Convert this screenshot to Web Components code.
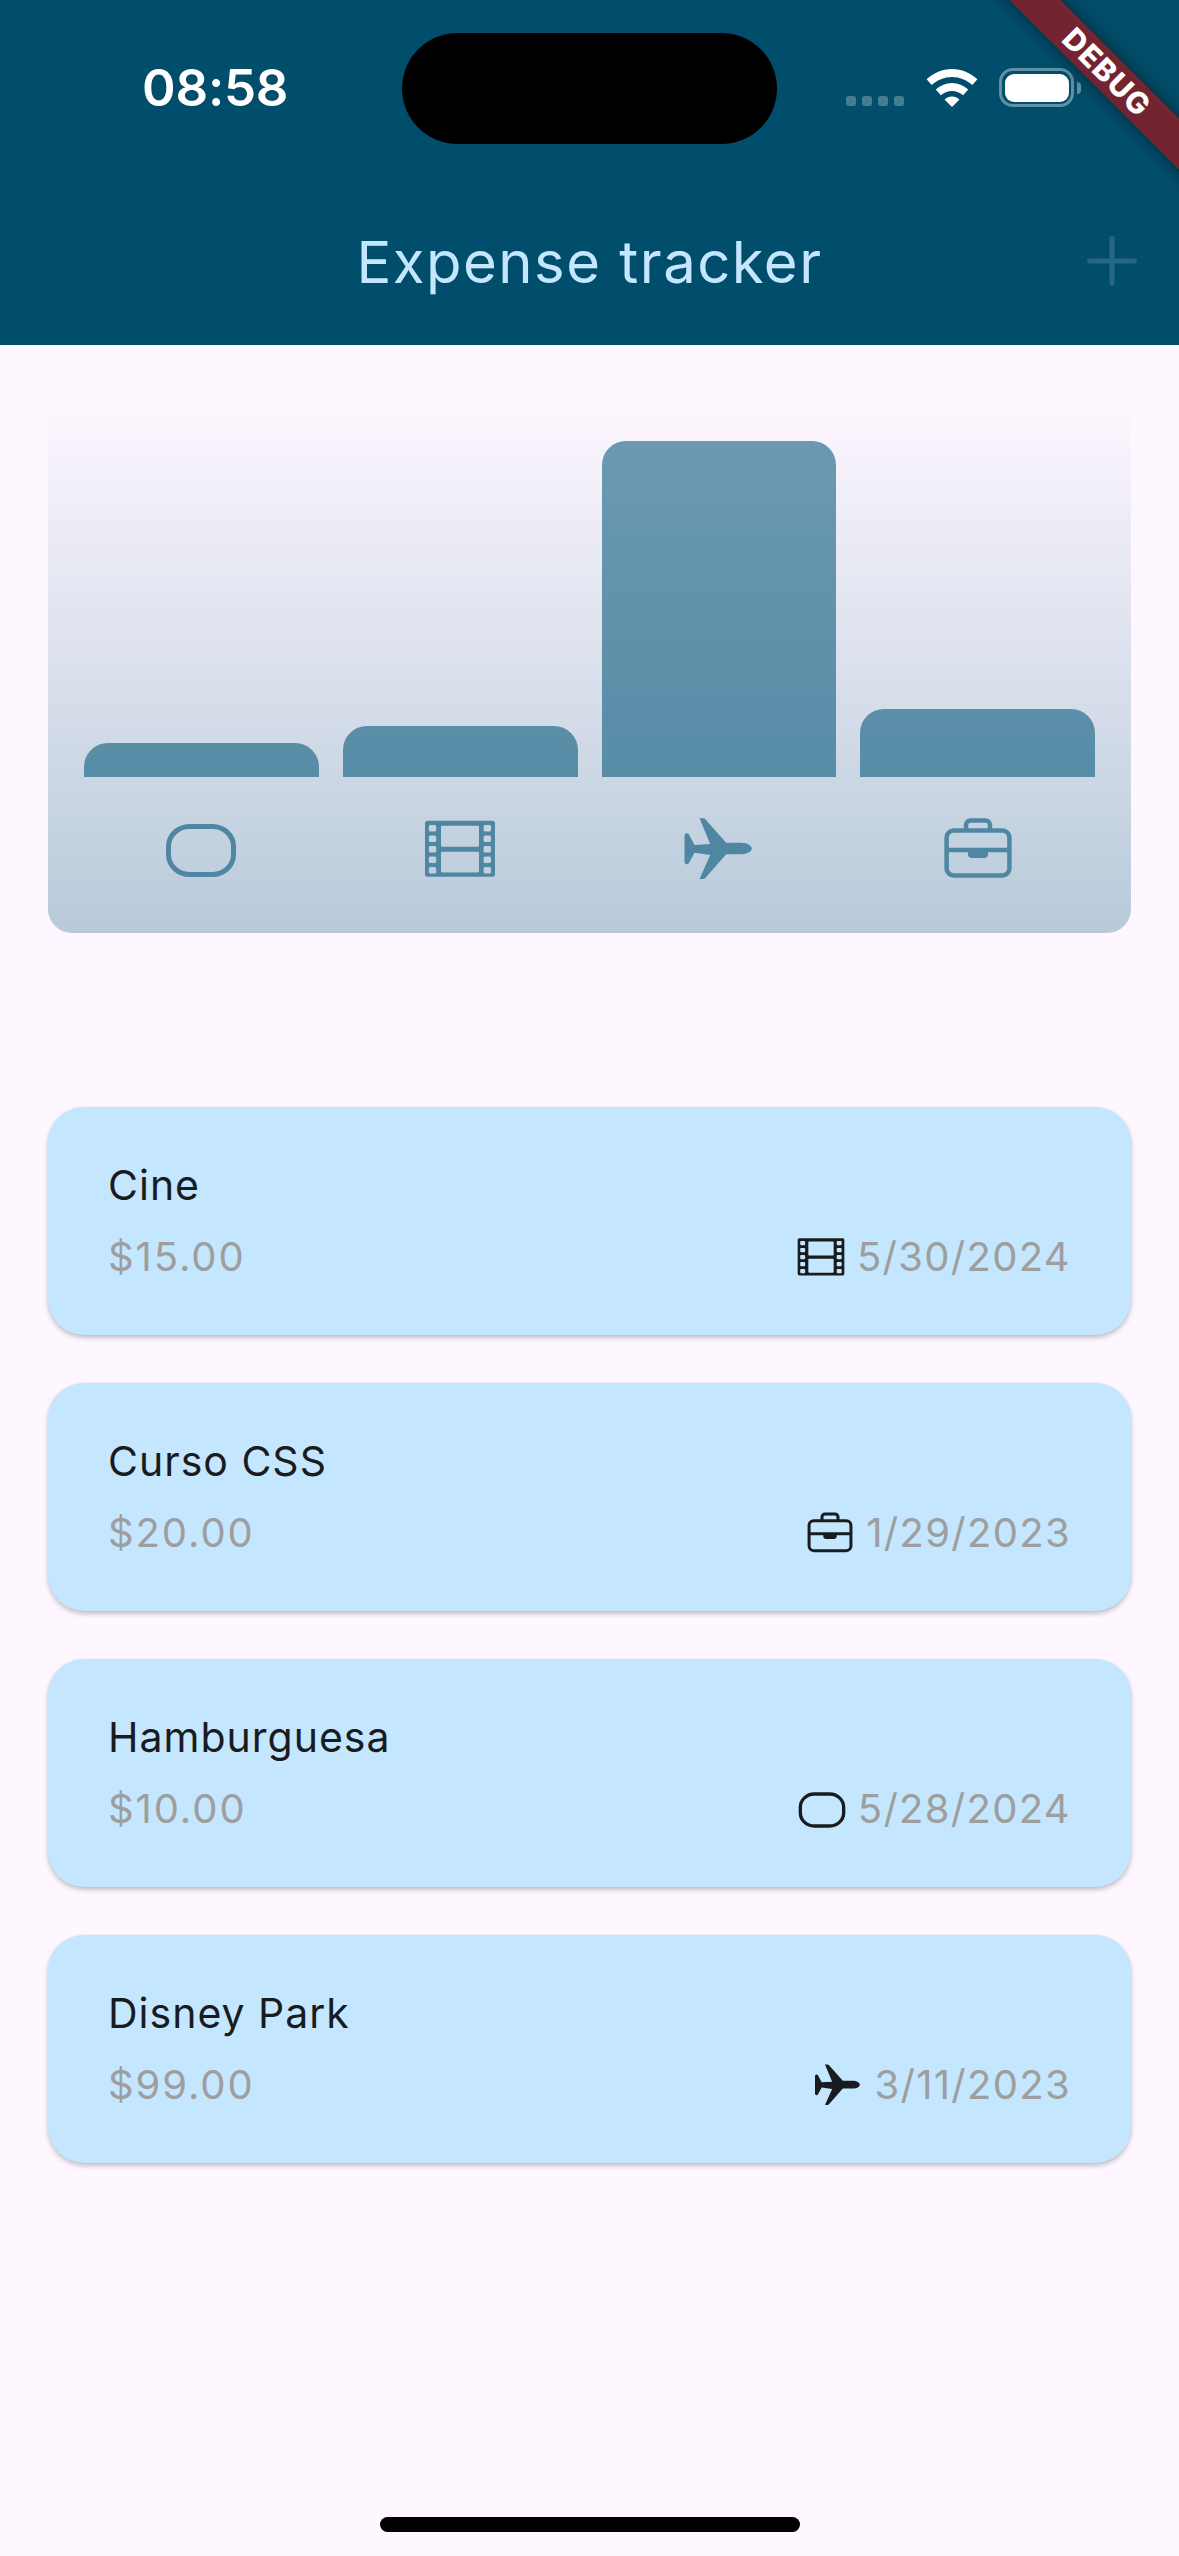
<!DOCTYPE html>
<html><head><meta charset="utf-8">
<style>
html,body{margin:0;padding:0;background:#fef7ff}
body{width:1179px;height:2556px;overflow:hidden;font-family:Inter,"Liberation Sans",sans-serif}
</style></head><body>
<expense-app>
  <app-header slot="header" title-text="Expense tracker"></app-header>
  <expense-chart>
    <chart-bar value="10" icon="food"></chart-bar>
    <chart-bar value="15" icon="film"></chart-bar>
    <chart-bar value="99" icon="plane"></chart-bar>
    <chart-bar value="20" icon="work"></chart-bar>
  </expense-chart>
  <expense-card name="Cine" amount="$15.00" date="5/30/2024" icon="film"></expense-card>
  <expense-card name="Curso CSS" amount="$20.00" date="1/29/2023" icon="work"></expense-card>
  <expense-card name="Hamburguesa" amount="$10.00" date="5/28/2024" icon="food"></expense-card>
  <expense-card name="Disney Park" amount="$99.00" date="3/11/2023" icon="plane"></expense-card>
</expense-app>
<script>
function rr(x,y,w,h,r){return `M${x+r} ${y}h${w-2*r}a${r} ${r} 0 0 1 ${r} ${r}v${h-2*r}a${r} ${r} 0 0 1-${r} ${r}h-${w-2*r}a${r} ${r} 0 0 1-${r}-${r}v-${h-2*r}a${r} ${r} 0 0 1 ${r}-${r}Z`}
function filmPath(){
  let d=rr(1,7.7,70,56,2.5);
  [12,22.5,33,43.5,54].forEach(y=>{d+=rr(4.8,y,7.4,6.5,1.6)+rr(59.6,y,7.4,6.5,1.6)});
  d+=rr(17,12.7,38,21,1.2)+rr(17,38.7,38,20.8,1.2);
  return d;
}
const ICONS={
 food:'<rect x="3.500" y="13.500" width="65" height="48" rx="21" ry="20" fill="none" stroke="currentColor" stroke-width="5"/>',
 film:`<path fill="currentColor" fill-rule="evenodd" d="${filmPath()}"/>`,
 plane:'<path fill="currentColor" d="M16.500 5.300H20Q21.500 5.300 22.500 6.500L43.200 29.700H58C64 29.700 68.800 32.500 68.800 35.500S64 41.300 58 41.300H43.200L22.500 64.800Q21.500 66 20 66H16.500L27.200 42L11.500 39.700L6 50Q5 51.500 3.500 51.300Q1.500 51 1.500 49V22.500Q1.500 20.500 3.500 20.300Q5 20 6 21.500L11.500 32L27.200 31Z"/>',
 work:'<g fill="none" stroke="currentColor" stroke-width="4.500"><rect x="4.600" y="17.500" width="62.800" height="45" rx="7"/><path d="M4.600 37h62.800"/><path d="M24 17v-5a4.500 4.500 0 0 1 4.500-4.500h15a4.500 4.500 0 0 1 4.500 4.500v5"/></g><path fill="currentColor" d="M26 37h20v4a4 4 0 0 1-4 4H30a4 4 0 0 1-4-4Z"/>'
};
function svg(name,size){return `<svg xmlns="http://www.w3.org/2000/svg" width="${size}" height="${size}" viewBox="0 0 72 72" aria-hidden="true">${ICONS[name]}</svg>`}

class ExpenseApp extends HTMLElement{constructor(){super();this.attachShadow({mode:'open'}).innerHTML=`<style>
:host{display:flex;flex-direction:column;position:relative;width:1179px;height:2556px;overflow:hidden;background:#fef7ff}
.list{display:flex;flex-direction:column;gap:48px;padding:0 48px}
.chart{padding:48px 48px 174px}
.home{position:absolute;left:380px;top:2517px;width:420px;height:15px;border-radius:8px;background:#000}
</style><slot name="header"></slot>
<div class="chart"><slot name="chart"></slot></div>
<div class="list"><slot></slot></div>
<div class="home"></div>`;}
connectedCallback(){this.querySelector('expense-chart')?.setAttribute('slot','chart')}}

class AppHeader extends HTMLElement{constructor(){super();this.attachShadow({mode:'open'}).innerHTML=`<style>
:host{display:block;position:relative;height:345px;background:#004e6b;overflow:hidden;font-family:Inter,"Liberation Sans",sans-serif}
.status{height:177px;display:flex;align-items:flex-start;position:relative;box-sizing:border-box;padding-top:57px}
.time{margin-left:142px;width:146px;font-size:51px;line-height:62px;font-weight:600;color:#fff;letter-spacing:-.2px;flex:none}
.island{margin-left:114px;margin-top:-24px;width:375px;height:111px;border-radius:55.500px;background:#000;flex:none}
.sig{display:flex;gap:6px;margin-left:69px;margin-top:39px;flex:none}
.sig i{width:10px;height:10px;border-radius:3px;background:rgba(255,255,255,.27)}
.wifi{margin-left:22px;margin-top:12px;flex:none;display:block}
.bat{margin-left:21px;margin-top:11px;flex:none;display:flex;align-items:center}
.bat b{display:block;box-sizing:border-box;width:75px;height:39px;border:3.500px solid rgba(255,255,255,.38);border-radius:14px;padding:2.500px}
.bat b::before{content:"";display:block;height:100%;border-radius:9px;background:#fff}
.bat u{display:block;width:4px;height:12px;margin-left:3px;background:rgba(255,255,255,.38);border-radius:0 4px 4px 0}
.bar{height:168px;position:relative;display:flex;align-items:center;justify-content:center}
h1{margin:0;font-size:58px;line-height:66px;font-weight:400;color:#c4e7ff;letter-spacing:1.500px;transform:translateY(1px)}
.plus{position:absolute;right:42px;top:59px;display:block}
.rib{position:absolute;top:0;right:0;width:240px;height:240px;overflow:hidden}
.rib div{position:absolute;left:-32px;top:54px;width:400px;height:36px;text-align:center;background:#722530;box-shadow:0 0 18px rgba(0,0,0,.5);transform:rotate(45deg);color:#fff;font:800 30px/36px Inter,"Liberation Sans",sans-serif;letter-spacing:1.200px}
</style>
<div class="status"><div class="time">08:58</div><div class="island"></div>
<div class="sig"><i></i><i></i><i></i><i></i></div>
<svg class="wifi" width="52" height="38" viewBox="0 0 52 38"><path fill="#fff" d="M26 0C16.400 0 7.700 3.800 .6 10.200l5.100 5.800C11.300 11 18.300 7.900 26 7.900S40.700 11 46.300 16l5.100-5.800C44.300 3.800 35.600 0 26 0Z"/><path fill="#fff" d="M26 14C20 14 14.500 16.300 9.800 20.400l5.100 5.800c3-2.700 6.800-4.300 11.100-4.300s8.100 1.600 11.100 4.300l5.100-5.800C37.500 16.300 32 14 26 14Z"/><path fill="#fff" d="M26 27.500c-2.800 0-5.400 1.100-7.500 3L26 38l7.500-7.500c-2.100-1.900-4.700-3-7.500-3Z"/></svg>
<div class="bat"><b></b><u></u></div></div>
<div class="bar"><h1>${this.getAttribute('title-text')||''}</h1>
<svg class="plus" width="50" height="50" viewBox="0 0 50 50"><path d="M25 2.500v45M2.500 25h45" stroke="#266784" stroke-width="5" stroke-linecap="round"/></svg></div>
<div class="rib"><div>DEBUG</div></div>`;}}

class ExpenseChart extends HTMLElement{constructor(){super();this.attachShadow({mode:'open'}).innerHTML=`<style>
:host{display:block;height:540px;box-sizing:border-box;padding:48px 36px;border-radius:24px;background:linear-gradient(to bottom,rgba(0,86,122,0),rgba(0,86,122,.28))}
.row{display:flex;gap:24px;height:100%}
</style><div class="row"><slot></slot></div>`;}}

class ChartBar extends HTMLElement{constructor(){super();const v=+this.getAttribute('value');this.attachShadow({mode:'open'}).innerHTML=`<style>
:host{display:flex;flex:1 1 0;flex-direction:column;gap:36px;min-width:0}
.area{height:336px;display:flex;align-items:flex-end}
.fill{width:100%;border-radius:24px 24px 0 0;background:rgba(0,84,119,.57)}
.ic{height:72px;display:flex;justify-content:center;color:#4f87a3}
svg{display:block}
</style><div class="area"><div class="fill" style="height:${v/99*100}%"></div></div><div class="ic">${svg(this.getAttribute('icon'),72)}</div>`;}}

class ExpenseCard extends HTMLElement{constructor(){super();const a=n=>this.getAttribute(n);this.attachShadow({mode:'open'}).innerHTML=`<style>
:host{display:block;height:228px;box-sizing:border-box;padding:48px 60px;border-radius:36px;background:#c4e7ff;box-shadow:0 3px 5px rgba(0,0,0,.22),0 0 3px rgba(0,0,0,.06);font-family:Inter,"Liberation Sans",sans-serif}
.t{font-size:41px;line-height:60px;color:#191c1e;letter-spacing:1px;height:60px}
.r{display:flex;align-items:center;margin-top:12px;height:60px;font-size:40px;line-height:60px;color:#9e9e9e}
.amt{letter-spacing:1.900px}
.d{letter-spacing:1.300px}
.sp{flex:1}
.ic{color:#191c1e;width:48px;height:48px;margin-right:12px}
svg{display:block}
</style><div class="t">${a('name')}</div><div class="r"><span class="amt">${a('amount')}</span><span class="sp"></span><span class="ic">${svg(a('icon'),48)}</span><span class="d">${a('date')}</span></div>`;}}

customElements.define('expense-app',ExpenseApp);
customElements.define('app-header',AppHeader);
customElements.define('expense-chart',ExpenseChart);
customElements.define('chart-bar',ChartBar);
customElements.define('expense-card',ExpenseCard);
</script>
</body></html>
